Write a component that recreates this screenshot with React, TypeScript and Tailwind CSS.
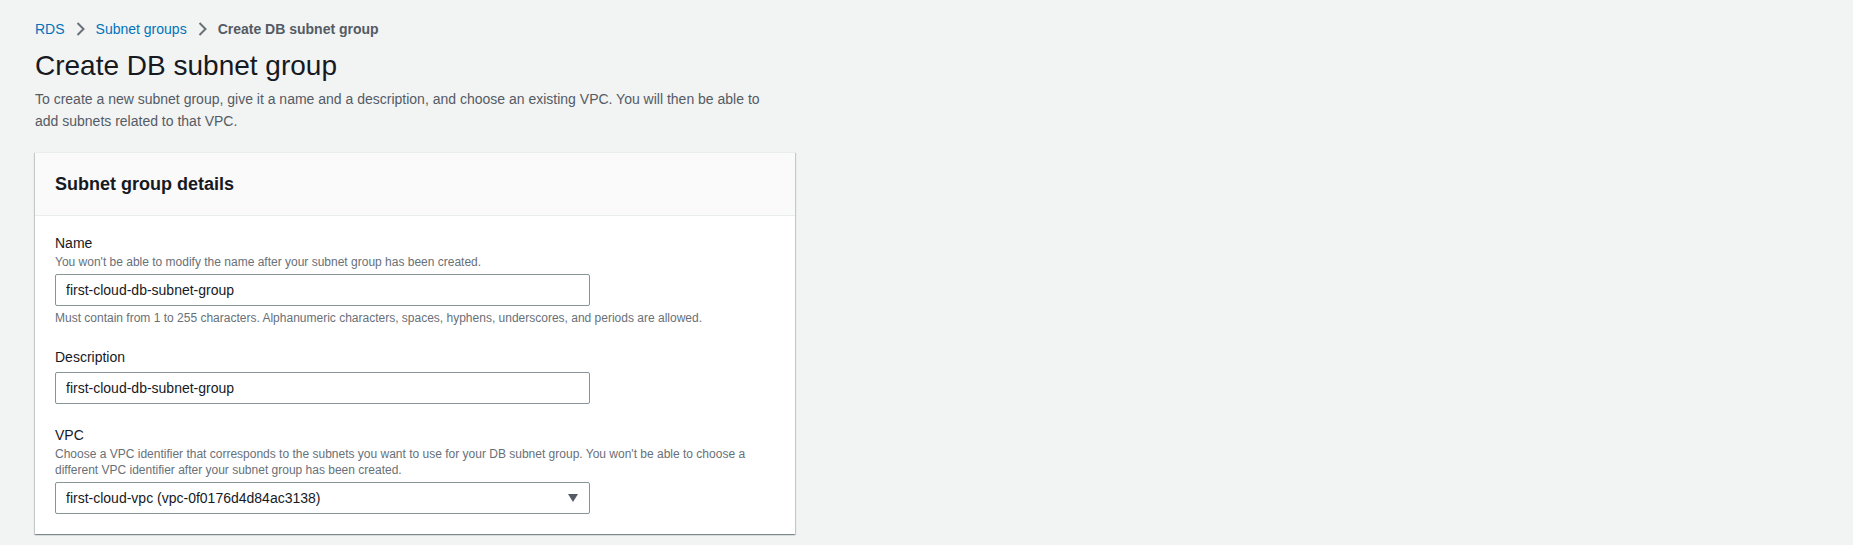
import { ReactNode } from "react";

const font = { fontFamily: '"Liberation Sans", Arial, sans-serif' };

function Chevron() {
  return (
    <svg width="9" height="14" viewBox="0 0 9 14" className="ml-[11px] mr-[11px] shrink-0" fill="none">
      <path d="M1.5 1l6 6-6 6" stroke="#687078" strokeWidth={2} />
    </svg>
  );
}

type FieldProps = {
  label: string;
  description?: ReactNode;
  constraint?: string;
  children: ReactNode;
};

function Field({ label, description, constraint, children }: FieldProps) {
  return (
    <div className="flex flex-col">
      <label className="text-[14px] leading-[22px] text-[#16191f]">{label}</label>
      {description && (
        <p className="text-[12px] leading-[16px] text-[#687078]">{description}</p>
      )}
      <div className="mt-1">{children}</div>
      {constraint && (
        <p className="mt-1 text-[12px] leading-[16px] text-[#687078]">{constraint}</p>
      )}
    </div>
  );
}

function TextInput({ value }: { value: string }) {
  return (
    <input
      readOnly
      value={value}
      className="h-[32px] w-[535px] rounded-[2px] border border-[#879596] bg-white px-[10px] text-[14px] text-[#16191f] outline-none"
      style={font}
    />
  );
}

export default function App() {
  return (
    <div className="min-h-[545px] w-full bg-[#f2f3f3] pl-[35px] pt-[18px]" style={font}>
      {/* breadcrumbs */}
      <nav className="flex items-center text-[14px] leading-[22px]">
        <a className="text-[#0073bb]">RDS</a>
        <Chevron />
        <a className="text-[#0073bb]">Subnet groups</a>
        <Chevron />
        <span className="font-bold text-[#545b64]">Create DB subnet group</span>
      </nav>

      <h1 className="mt-[8px] text-[28px] leading-[36px] font-normal text-[#16191f]">
        Create DB subnet group
      </h1>
      <p className="mt-[4px] w-[740px] text-[14px] leading-[22px] text-[#545b64]">
        To create a new subnet group, give it a name and a description, and choose an existing VPC. You will then be able to add subnets related to that VPC.
      </p>

      {/* card */}
      <div className="mt-[20px] w-[760px] border-t border-[#eaeded] bg-white shadow-[0_1px_1px_0_rgba(0,28,36,0.3),1px_1px_1px_0_rgba(0,28,36,0.15),-1px_1px_1px_0_rgba(0,28,36,0.15)]">
        <div className="border-b border-[#eaeded] bg-[#fafafa] px-5 py-5">
          <h2 className="text-[18px] leading-[22px] font-bold text-[#16191f]">Subnet group details</h2>
        </div>
        <div className="flex flex-col gap-5 px-5 pt-[16px] pb-5">
          <Field
            label="Name"
            description="You won't be able to modify the name after your subnet group has been created."
            constraint="Must contain from 1 to 255 characters. Alphanumeric characters, spaces, hyphens, underscores, and periods are allowed."
          >
            <TextInput value="first-cloud-db-subnet-group" />
          </Field>
          <Field label="Description">
            <TextInput value="first-cloud-db-subnet-group" />
          </Field>
          <Field
            label="VPC"
            description={
              <>
                Choose a VPC identifier that corresponds to the subnets you want to use for your DB subnet group. You won't be able to choose a
                <br />
                different VPC identifier after your subnet group has been created.
              </>
            }
          >
            <div className="flex h-[32px] w-[535px] items-center justify-between rounded-[2px] border border-[#879596] bg-white pl-[10px] pr-[11px] text-[14px] text-[#16191f]">
              <span>first-cloud-vpc (vpc-0f0176d4d84ac3138)</span>
              <svg width="10" height="8" viewBox="0 0 10 8">
                <path d="M0 0h10L5 8z" fill="#545b64" />
              </svg>
            </div>
          </Field>
        </div>
      </div>
    </div>
  );
}
